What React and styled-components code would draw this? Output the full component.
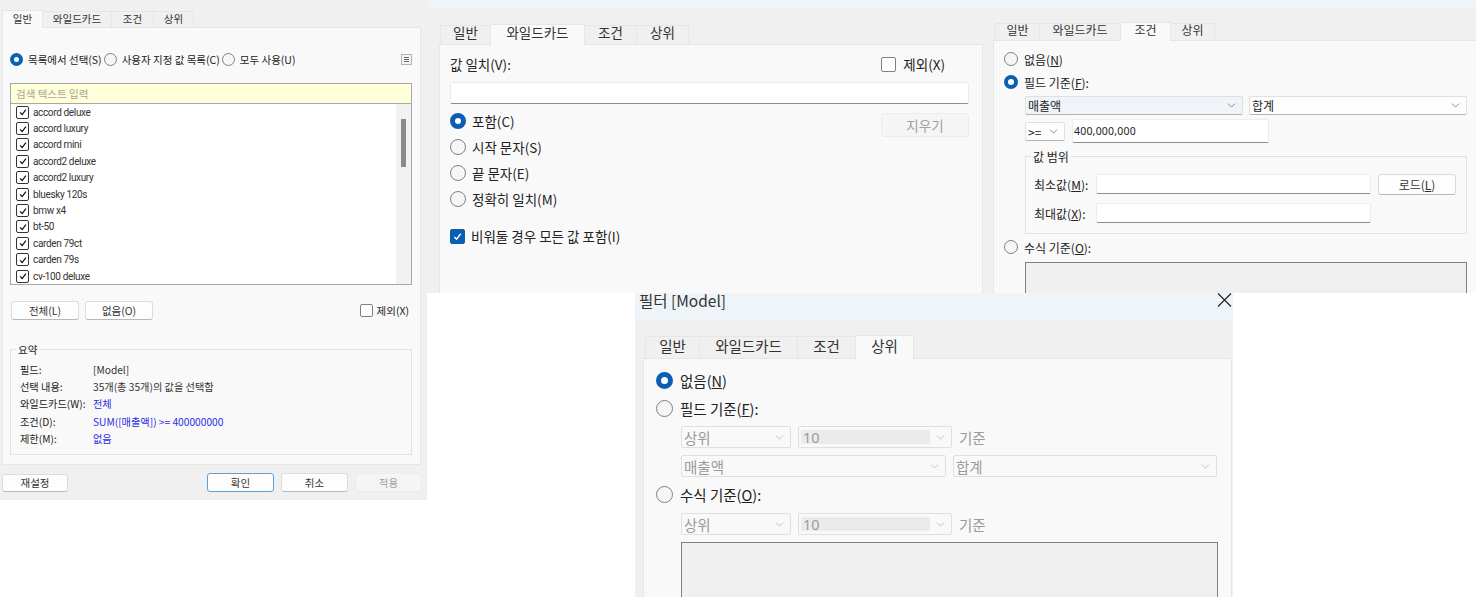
import React from "react";
import styled, { createGlobalStyle } from "styled-components";
import { ChevronDown } from "lucide-react";

const GlobalStyle = createGlobalStyle`
  html, body { margin: 0; padding: 0; background: #fff; overflow: hidden; }
  body { font-family: "Noto Sans CJK KR", "Noto Sans", sans-serif; color: #222; }
  u { text-underline-offset: 1px; }
`;

const Canvas = styled.div`
  display: grid;
  grid-template-columns: 427px 208px 358px 240px 243px;
  grid-template-rows: 293px 304px;
  width: 1476px;
  height: 597px;
  overflow: hidden;
`;

const Dialog = styled.section`
  grid-column: ${(p) => p.$col};
  grid-row: ${(p) => p.$row};
  height: ${(p) => p.$h}px;
  background: #f0f0f0;
  font-size: ${(p) => p.$fs}px;
  overflow: hidden;
`;

const TitleBar = styled.header`
  height: ${(p) => p.$h}px;
  background: #eff4f9;
  display: flex;
  align-items: flex-start;
  justify-content: space-between;
  padding: 0 1px 0 4px;
  font-size: 15.5px;
  line-height: 14px;
  color: #333;
`;

const TabStrip = styled.div`
  display: flex;
  align-items: flex-end;
  height: ${(p) => p.$h}px;
  margin: ${(p) => p.$top}px 0 0 ${(p) => p.$left}px;
`;

const Tab = styled.div`
  width: ${(p) => p.$w}px;
  height: ${(p) => (p.$active ? "100%" : "calc(100% - 2px)")};
  display: flex;
  align-items: center;
  justify-content: center;
  box-sizing: border-box;
  padding-bottom: ${(p) => p.$nudge}px;
  background: ${(p) => (p.$active ? "#f9f9f9" : "#f0f0f0")};
  border: 1px solid #e6e6e6;
  border-bottom: none;
  border-left-width: ${(p) => (p.$first ? 1 : 0)}px;
  color: #333;
  position: relative;
  z-index: ${(p) => (p.$active ? 1 : 0)};
  margin-bottom: ${(p) => (p.$active ? -1 : 0)}px;
`;

const Body = styled.div`
  box-sizing: border-box;
  width: ${(p) => p.$w}px;
  height: ${(p) => p.$h}px;
  margin-left: ${(p) => p.$left}px;
  background: #f9f9f9;
  border: 1px solid #e6e6e6;
  padding: ${(p) => p.$pad};
`;

const Row = styled.div`
  display: flex;
  align-items: center;
  gap: ${(p) => p.$gap || 0}px;
  margin-top: ${(p) => p.$top || 0}px;
  margin-left: ${(p) => p.$left || 0}px;
  margin-right: ${(p) => p.$right || 0}px;
  height: ${(p) => p.$h}px;
  justify-content: ${(p) => p.$justify || "flex-start"};
`;

const RadioDot = styled.span`
  flex: none;
  box-sizing: border-box;
  width: ${(p) => p.$size}px;
  height: ${(p) => p.$size}px;
  border-radius: 50%;
  margin-left: ${(p) => p.$before || 0}px;
  margin-right: ${(p) => p.$gap}px;
  background: ${(p) => (p.$on ? "#fff" : "#f6f6f6")};
  border: ${(p) => (p.$on ? `${Math.round(p.$size * 0.3)}px solid #0a5fb4` : "1.3px solid #808080")};
`;

const Label = styled.span`
  white-space: nowrap;
  color: ${(p) => (p.$muted ? "#9a9a9a" : "inherit")};
`;

const Radio = ({ on, size, gap, before, children }) => (
  <>
    <RadioDot $on={on} $size={size} $gap={gap} $before={before} />
    <Label>{children}</Label>
  </>
);

const Tick = styled.span`
  flex: none;
  box-sizing: border-box;
  width: ${(p) => p.$size}px;
  height: ${(p) => p.$size}px;
  display: flex;
  align-items: center;
  justify-content: center;
  border-radius: 2px;
  margin-right: ${(p) => p.$gap}px;
  background: ${(p) => (p.$accent ? "#0a5fb4" : "#fff")};
  border: 1px solid ${(p) => (p.$accent ? "#0a5fb4" : p.$dark ? "#333" : "#808080")};
`;

const CheckMark = ({ color, size }) => (
  <svg width={size} height={size} viewBox="0 0 12 12" fill="none">
    <path d="M2.5 6.5 L5 9 L9.5 3" stroke={color} strokeWidth="1.5" />
  </svg>
);

const CloseGlyph = () => (
  <svg width="15" height="14" viewBox="0 0 15 14" fill="none">
    <path d="M1 0.5 L14 13.5 M14 0.5 L1 13.5" stroke="#222" strokeWidth="1.1" />
  </svg>
);

const Button = styled.div`
  box-sizing: border-box;
  width: ${(p) => p.$w}px;
  height: ${(p) => p.$h}px;
  display: flex;
  align-items: center;
  justify-content: center;
  flex: none;
  margin-top: ${(p) => p.$top || 0}px;
  margin-left: ${(p) => p.$before || 0}px;
  border-radius: 3px;
  background: ${(p) => (p.$disabled ? "#f5f5f5" : "#fdfdfd")};
  color: ${(p) => (p.$disabled ? "#a0a0a0" : "#333")};
  border: 1px solid ${(p) => (p.$primary ? "#5aa0dc" : p.$disabled ? "#ececec" : "#dcdcdc")};
  border-bottom-color: ${(p) => (p.$primary ? "#5aa0dc" : p.$disabled ? "#ececec" : "#b8b8b8")};
`;

const TextField = styled.div`
  box-sizing: border-box;
  width: ${(p) => p.$w}px;
  height: ${(p) => p.$h}px;
  flex: none;
  display: flex;
  align-items: center;
  margin-top: ${(p) => p.$top || 0}px;
  padding-left: 1px;
  background: #fff;
  border: 1px solid #ececec;
  border-bottom: 1.5px solid #8c8c8c;
  border-radius: 2px;
  font-family: "Noto Sans", sans-serif;
  font-size: 10.5px;
  letter-spacing: 0.2px;
`;

const SelectBox = styled.div`
  box-sizing: border-box;
  width: ${(p) => p.$w}px;
  height: ${(p) => p.$h}px;
  flex: none;
  display: flex;
  align-items: center;
  justify-content: space-between;
  padding: 0 4px 0 1px;
  background: ${(p) => (p.$shade ? "#f0f4f9" : p.$disabled ? "#f9f9f9" : "#fdfdfd")};
  border: 1px solid #e0e0e0;
  border-bottom-color: ${(p) => (p.$disabled ? "#e0e0e0" : "#b4b4b4")};
  border-radius: 2px;
  color: ${(p) => (p.$disabled ? "#9a9a9a" : "inherit")};
`;

const SelectValue = styled.span`
  flex: ${(p) => (p.$fill ? 1 : "none")};
  align-self: stretch;
  display: flex;
  align-items: center;
  margin: ${(p) => (p.$fill ? "3px 4px 3px 1px" : 0)};
  padding-left: ${(p) => (p.$fill ? 2 : 1)}px;
  background: ${(p) => (p.$fill ? "#ebebeb" : "transparent")};
  font-family: ${(p) => (p.$latin ? '"Noto Sans", sans-serif' : "inherit")};
`;

const Select = ({ w, h, shade, disabled, fill, latin, children }) => (
  <SelectBox $w={w} $h={h} $shade={shade} $disabled={disabled}>
    <SelectValue $fill={fill} $latin={latin}>{children}</SelectValue>
    <ChevronDown size={13} strokeWidth={1.2} color={disabled ? "#a8a8a8" : "#555"} />
  </SelectBox>
);

const Fieldset = styled.div`
  position: relative;
  box-sizing: border-box;
  width: ${(p) => p.$w}px;
  height: ${(p) => p.$h}px;
  margin: ${(p) => p.$margin};
  padding: ${(p) => p.$pad};
  border: 1px solid #e2e2e2;
`;

const Legend = styled.span`
  position: absolute;
  top: -8px;
  left: ${(p) => p.$left}px;
  padding: 0 2px;
  line-height: 15px;
  background: #f9f9f9;
`;

const ListBox = styled.div`
  display: flex;
  flex-direction: column;
  box-sizing: border-box;
  width: 402px;
  height: 202px;
  margin-top: 17px;
  border: 1px solid #a8a8a8;
  background: #fff;
`;

const SearchBar = styled.div`
  height: 19px;
  flex: none;
  display: flex;
  align-items: center;
  padding-left: 5px;
  background: #ffffd9;
  border-bottom: 1px solid #a8a8a8;
  color: #a5a596;
  font-size: 10.5px;
`;

const ListArea = styled.div`
  flex: 1;
  display: flex;
  min-height: 0;
`;

const Items = styled.div`
  flex: 1;
`;

const Item = styled.div`
  display: flex;
  align-items: center;
  height: 16.4px;
  padding-left: 5px;
  font-family: Roboto, sans-serif;
  font-size: 10px;
  letter-spacing: -0.35px;
  color: #333;
`;

const Scrollbar = styled.div`
  width: 15px;
  flex: none;
  background: #f2f2f2;
  padding: 15px 5px 0 5px;
  box-sizing: border-box;
`;

const Thumb = styled.div`
  width: 5px;
  height: 48px;
  background: #8a8a8a;
`;

const MenuIcon = styled.span`
  box-sizing: border-box;
  width: 11px;
  height: 11px;
  display: flex;
  flex-direction: column;
  justify-content: center;
  gap: 1px;
  padding: 0 2px;
  background: #f4f4f4;
  border: 1px solid #b4b4b4;
  & > i { display: block; height: 1px; background: #666; }
`;

const SummaryRow = styled.div`
  display: flex;
  align-items: center;
  height: ${(p) => p.$h}px;
`;

const SummaryKey = styled.span`
  width: 73px;
  flex: none;
  white-space: nowrap;
  font-size: 10.2px;
`;

const SummaryValue = styled.span`
  white-space: nowrap;
  font-size: 10.2px;
  color: ${(p) => (p.$link ? "#2a2ae8" : "#333")};
`;

const FooterBar = styled.div`
  display: flex;
  align-items: center;
  justify-content: space-between;
  width: 420px;
  margin: 8px 0 0 2px;
`;

const FooterGroup = styled.div`
  display: flex;
  gap: 7px;
`;

const AreaBox = styled.div`
  box-sizing: border-box;
  width: ${(p) => p.$w}px;
  height: ${(p) => p.$h}px;
  margin: ${(p) => p.$margin};
  background: #f0f0f0;
  border: 1px solid #808080;
`;

const FieldName = styled.span`
  width: 62px;
  flex: none;
  white-space: nowrap;
`;

const MODELS = [
  "accord deluxe", "accord luxury", "accord mini", "accord2 deluxe", "accord2 luxury",
  "bluesky 120s", "bmw x4", "bt-50", "carden 79ct", "carden 79s", "cv-100 deluxe",
];

const TabBar = ({ widths, active, h, top, left, nudge = 0 }) => (
  <TabStrip $h={h} $top={top} $left={left}>
    {["일반", "와일드카드", "조건", "상위"].map((name, i) => (
      <Tab key={name} $w={widths[i]} $active={i === active} $first={i === 0} $nudge={nudge}>{name}</Tab>
    ))}
  </TabStrip>
);

const GeneralDialog = () => (
  <Dialog $col="1" $row="1 / span 2" $h={500} $fs={10.5}>
    <TabBar widths={[41, 69, 42, 40]} active={0} h={18} top={9} left={2} nudge={3} />
    <Body $w={419} $h={438} $left={2} $pad="24px 8px 0 7px">
      <Row $h={14} $justify="space-between">
        <Row $h={14}>
          <Radio on size={13} gap={5}>목록에서 선택(S)</Radio>
          <Radio size={13} gap={5} before={2}>사용자 지정 값 목록(C)</Radio>
          <Radio size={13} gap={5} before={2}>모두 사용(U)</Radio>
        </Row>
        <MenuIcon><i /><i /><i /></MenuIcon>
      </Row>
      <ListBox>
        <SearchBar>검색 텍스트 입력</SearchBar>
        <ListArea>
          <Items>
            {MODELS.map((m) => (
              <Item key={m}>
                <Tick $size={13} $gap={4} $dark><CheckMark color="#111" size={10} /></Tick>
                {m}
              </Item>
            ))}
          </Items>
          <Scrollbar><Thumb /></Scrollbar>
        </ListArea>
      </ListBox>
      <Row $h={19} $top={16} $justify="space-between" $left={1}>
        <Row $h={19} $gap={6}>
          <Button $w={68} $h={19}>전체(L)</Button>
          <Button $w={68} $h={19}>없음(O)</Button>
        </Row>
        <Row $h={19} $right={3}>
          <Tick $size={13} $gap={4} />
          <Label>제외(X)</Label>
        </Row>
      </Row>
      <Fieldset $w={402} $h={106} $margin="29px 0 0 0" $pad="11px 9px 0 9px">
        <Legend $left={5}>요약</Legend>
        <SummaryRow $h={17}><SummaryKey>필드:</SummaryKey><SummaryValue>[Model]</SummaryValue></SummaryRow>
        <SummaryRow $h={17}><SummaryKey>선택 내용:</SummaryKey><SummaryValue>35개(총 35개)의 값을 선택함</SummaryValue></SummaryRow>
        <SummaryRow $h={17}><SummaryKey>와일드카드(W):</SummaryKey><SummaryValue $link>전체</SummaryValue></SummaryRow>
        <SummaryRow $h={18}><SummaryKey>조건(D):</SummaryKey><SummaryValue $link>SUM([매출액]) &gt;= 400000000</SummaryValue></SummaryRow>
        <SummaryRow $h={17}><SummaryKey>제한(M):</SummaryKey><SummaryValue $link>없음</SummaryValue></SummaryRow>
      </Fieldset>
    </Body>
    <FooterBar>
      <Button $w={66} $h={18}>재설정</Button>
      <FooterGroup>
        <Button $w={67} $h={19} $primary>확인</Button>
        <Button $w={67} $h={19}>취소</Button>
        <Button $w={67} $h={19} $disabled>적용</Button>
      </FooterGroup>
    </FooterBar>
  </Dialog>
);

const WildcardDialog = () => (
  <Dialog $col="2 / span 2" $row="1" $h={293} $fs={13.5}>
    <TitleBar $h={9} />
    <TabBar widths={[51, 94, 52, 52]} active={1} h={21} top={14} left={13} nudge={6} />
    <Body $w={544} $h={260} $left={12} $pad="10px 13px 0 10px">
      <Row $h={18} $justify="space-between">
        <Label>값 일치(V):</Label>
        <Row $h={18} $right={24}>
          <Tick $size={15} $gap={7} />
          <Label>제외(X)</Label>
        </Row>
      </Row>
      <TextField $w={519} $h={22} $top={9} />
      <Row $h={20} $top={7} $justify="space-between">
        <Row $h={20}><Radio on size={16} gap={6}>포함(C)</Radio></Row>
        <Button $w={88} $h={24} $disabled $top={8}>지우기</Button>
      </Row>
      <Row $h={20} $top={6}><Radio size={16} gap={6}>시작 문자(S)</Radio></Row>
      <Row $h={20} $top={6}><Radio size={16} gap={6}>끝 문자(E)</Radio></Row>
      <Row $h={20} $top={6}><Radio size={16} gap={6}>정확히 일치(M)</Radio></Row>
      <Row $h={20} $top={17}>
        <Tick $size={15} $gap={6} $accent><CheckMark color="#fff" size={11} /></Tick>
        <Label>비워둘 경우 모든 값 포함(I)</Label>
      </Row>
    </Body>
  </Dialog>
);

const ConditionDialog = () => (
  <Dialog $col="4 / span 2" $row="1" $h={293} $fs={12}>
    <TitleBar $h={9} />
    <TabBar widths={[45, 81, 50, 44]} active={2} h={19} top={12} left={2} nudge={5} />
    <Body $w={484} $h={254} $left={0} $pad="9px 8px 0 10px">
      <Row $h={18}><Radio size={14} gap={6}><>없음(<u>N</u>)</></Radio></Row>
      <Row $h={18} $top={5}><Radio on size={14} gap={6}><>필드 기준(<u>F</u>):</></Radio></Row>
      <Row $h={19} $top={5} $left={21} $gap={6}>
        <Select w={218} h={19} shade>매출액</Select>
        <Select w={218} h={19}>합계</Select>
      </Row>
      <Row $h={24} $top={4} $left={21} $gap={7}>
        <Select w={40} h={19}>&gt;=</Select>
        <TextField $w={197} $h={24}>400,000,000</TextField>
      </Row>
      <Fieldset $w={442} $h={78} $margin="13px 0 0 21px" $pad="17px 0 0 8px">
        <Legend $left={5}>값 범위</Legend>
        <Row $h={20}>
          <FieldName>최소값(<u>M</u>):</FieldName>
          <TextField $w={275} $h={20} />
          <Button $w={78} $h={21} $before={7}>로드(<u>L</u>)</Button>
        </Row>
        <Row $h={20} $top={9}>
          <FieldName>최대값(<u>X</u>):</FieldName>
          <TextField $w={275} $h={20} />
        </Row>
      </Fieldset>
      <Row $h={18} $top={4}><Radio size={14} gap={6}><>수식 기준(<u>O</u>):</></Radio></Row>
      <AreaBox $w={442} $h={60} $margin="6px 0 0 21px" />
    </Body>
  </Dialog>
);

const TopDialog = () => (
  <Dialog $col="3 / span 2" $row="2" $h={304} $fs={14.5}>
    <TitleBar $h={27}>
      <span>필터 [Model]</span>
      <CloseGlyph />
    </TitleBar>
    <TabBar widths={[55, 98, 58, 58]} active={3} h={24} top={14} left={10} nudge={5} />
    <Body $w={589} $h={260} $left={8} $pad="12px 12px 0 12px">
      <Row $h={19}><Radio on size={17} gap={7}><>없음(<u>N</u>)</></Radio></Row>
      <Row $h={19} $top={9}><Radio size={17} gap={7}><>필드 기준(<u>F</u>):</></Radio></Row>
      <Row $h={22} $top={8} $left={25} $gap={7}>
        <Select w={110} h={22} disabled>상위</Select>
        <Select w={154} h={22} disabled fill latin>10</Select>
        <Label $muted>기준</Label>
      </Row>
      <Row $h={22} $top={7} $left={25} $gap={7}>
        <Select w={265} h={22} disabled>매출액</Select>
        <Select w={264} h={22} disabled>합계</Select>
      </Row>
      <Row $h={19} $top={8}><Radio size={17} gap={7}><>수식 기준(<u>O</u>):</></Radio></Row>
      <Row $h={22} $top={9} $left={25} $gap={7}>
        <Select w={110} h={22} disabled>상위</Select>
        <Select w={154} h={22} disabled fill latin>10</Select>
        <Label $muted>기준</Label>
      </Row>
      <AreaBox $w={537} $h={60} $margin="7px 0 0 25px" />
    </Body>
  </Dialog>
);

export default function App() {
  return (
    <>
      <GlobalStyle />
      <Canvas>
        <GeneralDialog />
        <WildcardDialog />
        <ConditionDialog />
        <TopDialog />
      </Canvas>
    </>
  );
}
